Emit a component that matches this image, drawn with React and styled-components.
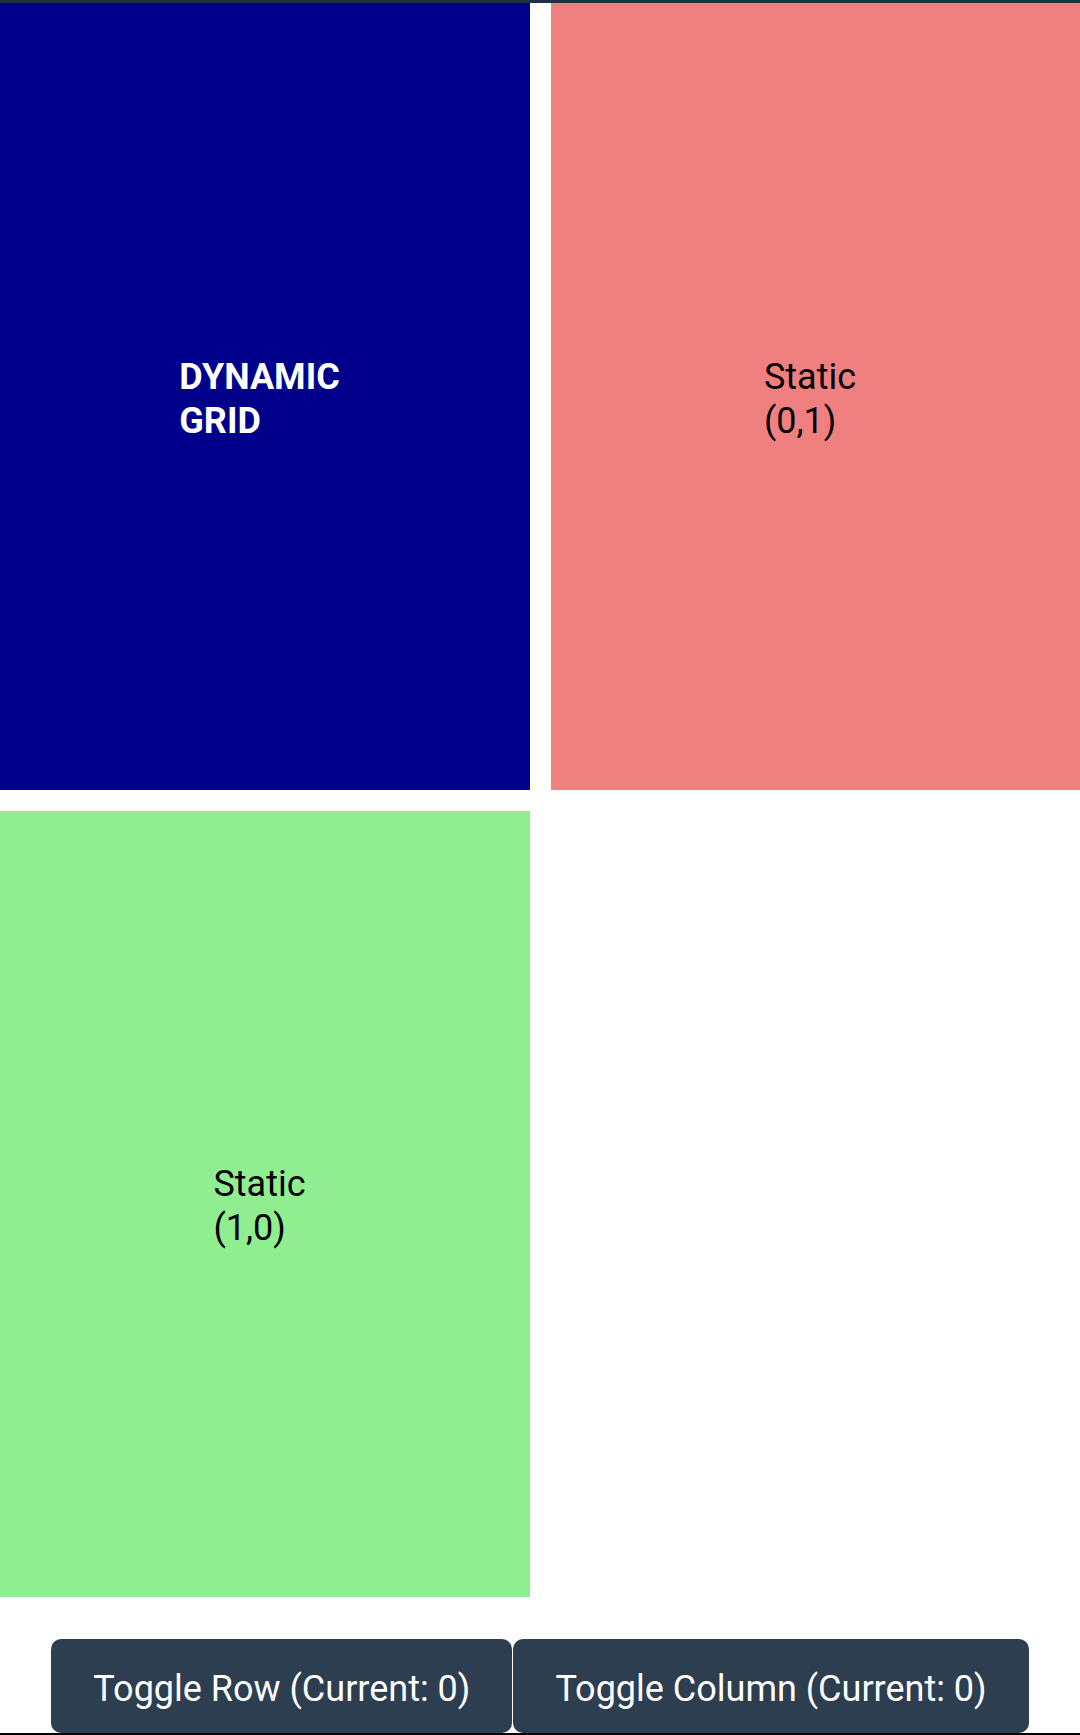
import React, { useState } from 'react';
import styled, { createGlobalStyle } from 'styled-components';

const GlobalStyle = createGlobalStyle`
    html, body {
        margin: 0;
        padding: 0;
        background: #fff;
        font-family: Roboto, "Liberation Sans", sans-serif;
    }
`

function App() {
    const [row, setRow] = useState(0);
    const [col, setCol] = useState(0);

    return (
        <Page>
            <GlobalStyle />
            <TopBar />
            <Grid>
                <Cell color='#00008b'>
                    <Label light bold>DYNAMIC<br />GRID</Label>
                </Cell>
                <Cell color='#f08080'>
                    <Label>Static<br />(0,1)</Label>
                </Cell>
                <Cell color='#90ee90'>
                    <Label>Static<br />(1,0)</Label>
                </Cell>
                <Cell />
            </Grid>
            <Controls>
                <Button onClick={() => setRow(row ? 0 : 1)}>Toggle Row (Current: {row})</Button>
                <Button onClick={() => setCol(col ? 0 : 1)}>Toggle Column (Current: {col})</Button>
            </Controls>
            <BottomLine />
        </Page>
    )
}

export default App;


// styled component
const Page = styled.div`
    width: 1080px;
    display: flex;
    flex-direction: column;
`

const TopBar = styled.div`
    height: 3px;
    background: #1f3046;
`

const Grid = styled.div`
    display: grid;
    grid-template-columns: 530px 529px;
    grid-template-rows: 787px 786px;
    column-gap: 21px;
    row-gap: 21px;
`

const Cell = styled.div`
    background: ${props => props.color || 'transparent'};
    display: flex;
    align-items: center;
    justify-content: center;
`

const Label = styled.div`
    width: min-content;
    white-space: nowrap;
    padding: 4px 11px 0 0;
    font-size: 36px;
    line-height: 44px;
    font-weight: ${props => props.bold ? 700 : 400};
    color: ${props => props.light ? '#fff' : '#000'};
`

const Controls = styled.div`
    display: flex;
    justify-content: center;
    gap: 1px;
    padding-top: 42px;
`

const Button = styled.button`
    height: 94px;
    padding: 6px 42px 0;
    border: none;
    border-radius: 10px;
    background: #2c3e50;
    color: #fff;
    font-family: Roboto, "Liberation Sans", sans-serif;
    font-size: 36px;
    cursor: pointer;
`

const BottomLine = styled.div`
    height: 2px;
    background: #000;
`
